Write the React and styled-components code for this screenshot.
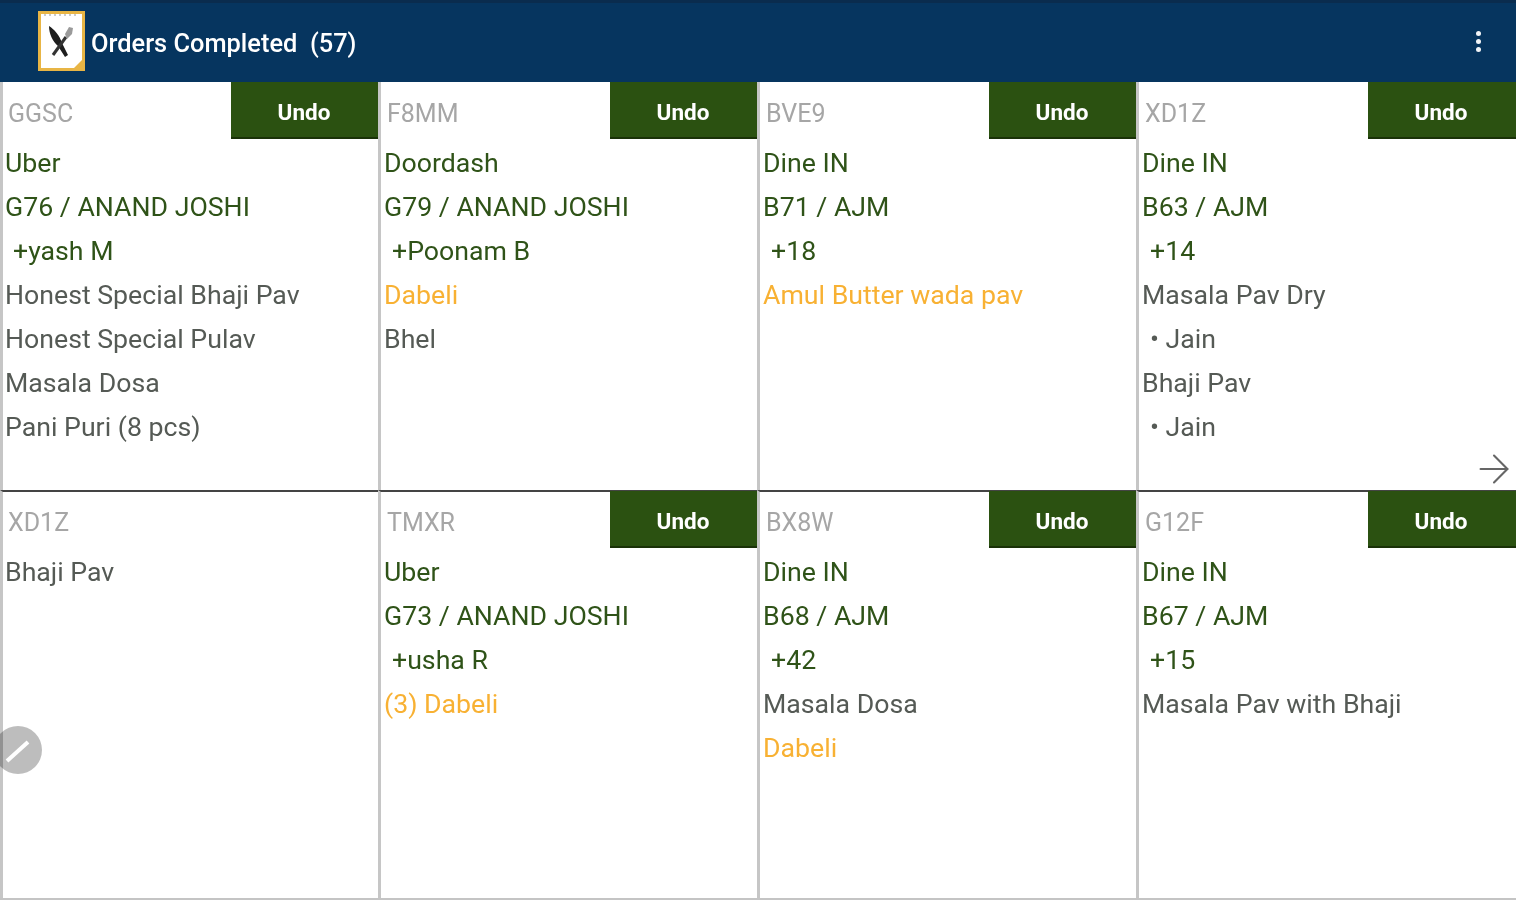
import React from "react"
import styled, { createGlobalStyle } from "styled-components"
import { ArrowRight } from "lucide-react"

const orders = [
  {
    code: "GGSC",
    lines: [
      ["Uber", "green"],
      ["G76 / ANAND JOSHI", "green"],
      ["+yash M", "green", true],
      ["Honest Special Bhaji Pav", "item"],
      ["Honest Special Pulav", "item"],
      ["Masala Dosa", "item"],
      ["Pani Puri (8 pcs)", "item"],
    ],
  },
  {
    code: "F8MM",
    lines: [
      ["Doordash", "green"],
      ["G79 / ANAND JOSHI", "green"],
      ["+Poonam B", "green", true],
      ["Dabeli", "orange"],
      ["Bhel", "item"],
    ],
  },
  {
    code: "BVE9",
    lines: [
      ["Dine IN", "green"],
      ["B71 / AJM", "green"],
      ["+18", "green", true],
      ["Amul Butter wada pav", "orange"],
    ],
  },
  {
    code: "XD1Z",
    more: true,
    lines: [
      ["Dine IN", "green"],
      ["B63 / AJM", "green"],
      ["+14", "green", true],
      ["Masala Pav Dry", "item"],
      ["• Jain", "item", true],
      ["Bhaji Pav", "item"],
      ["• Jain", "item", true],
    ],
  },
  {
    code: "XD1Z",
    noUndo: true,
    edit: true,
    lines: [["Bhaji Pav", "item"]],
  },
  {
    code: "TMXR",
    lines: [
      ["Uber", "green"],
      ["G73 / ANAND JOSHI", "green"],
      ["+usha R", "green", true],
      ["(3) Dabeli", "orange"],
    ],
  },
  {
    code: "BX8W",
    lines: [
      ["Dine IN", "green"],
      ["B68 / AJM", "green"],
      ["+42", "green", true],
      ["Masala Dosa", "item"],
      ["Dabeli", "orange"],
    ],
  },
  {
    code: "G12F",
    lines: [
      ["Dine IN", "green"],
      ["B67 / AJM", "green"],
      ["+15", "green", true],
      ["Masala Pav with Bhaji", "item"],
    ],
  },
]

const Logo = () => (
  <LogoBox>
    <svg width="41" height="54" viewBox="0 0 41 54">
      <path d="M3 1 H38" stroke="#bbb" strokeWidth="1.5" strokeDasharray="2 3" fill="none" />
      <path d="M8 12 C13 15 19 22 21 29 L27 41 L24 43 L17 32 C12 28 8 20 8 12 Z" fill="#1e1e1e" />
      <path d="M12 41 L25 23" stroke="#333" strokeWidth="3" fill="none" />
      <path d="M24 20 L28 13 L32 14 L31 20 L26 25 Z" fill="#9a9a9a" />
      <path d="M41 46 V54 H33 Z" fill="#e8b545" />
    </svg>
  </LogoBox>
)

const OrderCard = ({ order }) => (
  <Card>
    <CardHead>
      <Code>{order.code}</Code>
      {!order.noUndo && (
        <UndoButton>
          <span>Undo</span>
        </UndoButton>
      )}
    </CardHead>
    <Lines>
      {order.lines.map(([text, tone, indent], i) => (
        <Line key={i} $tone={tone} $indent={indent}>
          {text}
        </Line>
      ))}
    </Lines>
    {order.more && (
      <MoreArrow>
        <ArrowRight size={46} strokeWidth={1.1} />
      </MoreArrow>
    )}
    {order.edit && (
      <EditButton>
        <svg width="30" height="30" viewBox="0 0 30 30">
          <path d="M4 26 L25 7" stroke="#fff" strokeWidth="4" fill="none" />
        </svg>
      </EditButton>
    )}
  </Card>
)

const App = () => {
  return (
    <Page>
      <GlobalStyle />
      <Header>
        <Logo />
        <Title>Orders Completed&nbsp; (57)</Title>
        <Dots>
          <i />
          <i />
          <i />
        </Dots>
      </Header>
      <Board>
        {orders.map((order, i) => (
          <OrderCard key={i} order={order} />
        ))}
      </Board>
    </Page>
  )
}

export default App

const GlobalStyle = createGlobalStyle`
  html, body {
    margin: 0;
    background: #fff;
  }
  body {
    font-family: Roboto, "Liberation Sans", sans-serif;
    overflow: hidden;
  }
`

const Page = styled.div`
  width: 1516px;
  height: 900px;
  display: flex;
  flex-direction: column;
  overflow: hidden;
`

const Header = styled.header`
  height: 82px;
  flex: none;
  display: flex;
  align-items: center;
  padding: 0 35px 0 38px;
  box-sizing: border-box;
  background: #06355f;
  border-top: 3px solid #0a2c4e;
`

const LogoBox = styled.div`
  width: 47px;
  height: 60px;
  margin-top: -3px;
  flex: none;
  box-sizing: border-box;
  background: #fff;
  border: 3px solid #e8b545;
  filter: blur(0.7px);
  svg {
    display: block;
  }
`

const Title = styled.h1`
  margin: 0 0 0 6px;
  color: #fff;
  font-size: 25.4px;
  font-weight: 500;
  flex: 1;
  filter: blur(0.7px);
`

const Dots = styled.div`
  display: flex;
  flex-direction: column;
  gap: 3px;
  position: relative;
  top: -1px;
  filter: blur(0.5px);
  i {
    width: 5px;
    height: 5px;
    border-radius: 50%;
    background: #f1f4f7;
  }
`

const Board = styled.main`
  flex: 1;
  display: grid;
  grid-template-columns: repeat(4, 1fr);
  grid-template-rows: 408px 408px;
  box-sizing: border-box;
  border-bottom: 2px solid #c4c4c4;
  min-height: 0;
`

const Card = styled.section`
  position: relative;
  box-sizing: border-box;
  border-left: 3px solid #c6c6c6;
  &:not(:nth-child(4n + 1)) {
    margin-left: -1px;
    padding-left: 1px;
  }
  &:nth-child(n + 5) {
    border-top: 2px solid #444;
  }
  &:nth-child(n + 5) > header {
    margin-top: -1px;
  }
`

const CardHead = styled.header`
  height: 57px;
  display: flex;
  align-items: center;
  justify-content: space-between;
`

const Code = styled.span`
  padding: 5px 0 0 5px;
  color: #a6a6a6;
  font-size: 25px;
  filter: blur(0.7px);
`

const UndoButton = styled.button`
  width: 148px;
  height: 57px;
  border: 0;
  padding: 5px 2px 0 0;
  background: #2b5111;
  border-bottom: 2px solid #1a3208;
  color: #fff;
  font-family: inherit;
  font-size: 22.5px;
  font-weight: 700;
  span {
    display: block;
    filter: blur(0.7px);
  }
`

const toneColors = {
  green: "#2f5318",
  item: "#555a55",
  orange: "#f8b133",
}

const Lines = styled.div`
  padding: 2px 0 0 2px;
  display: flex;
  flex-direction: column;
  filter: blur(0.7px);
`

const Line = styled.div`
  height: 44px;
  line-height: 44px;
  font-size: 26.7px;
  white-space: nowrap;
  color: ${(p) => toneColors[p.$tone]};
  padding-left: ${(p) => (p.$indent ? "8px" : "0")};
`

const MoreArrow = styled.div`
  position: absolute;
  right: -1px;
  bottom: -2px;
  height: 46px;
  color: #666;
  svg {
    display: block;
  }
`

const EditButton = styled.div`
  position: absolute;
  left: -9px;
  bottom: 124px;
  width: 48px;
  height: 48px;
  border-radius: 50%;
  background: rgba(0, 0, 0, 0.26);
  display: flex;
  align-items: center;
  justify-content: center;
`
